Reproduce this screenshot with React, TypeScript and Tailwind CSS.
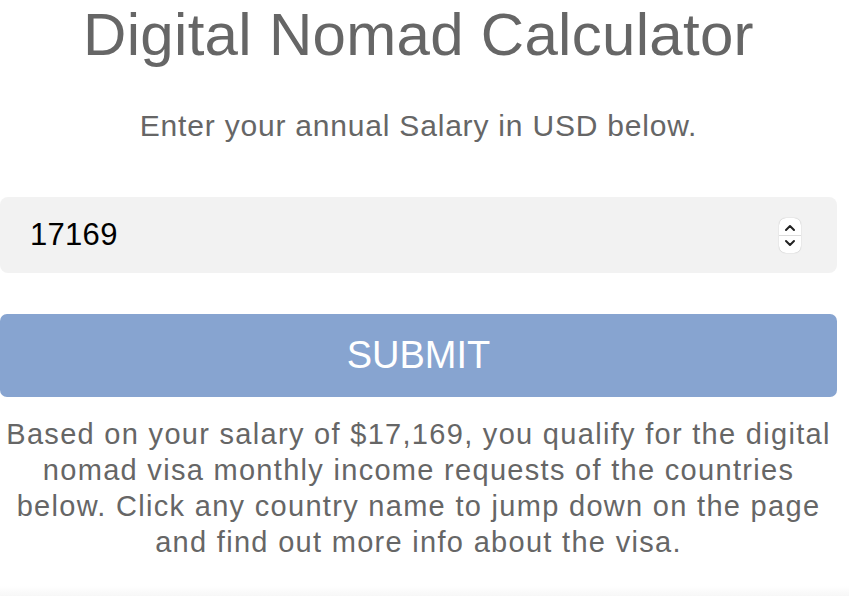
export default function App() {
  return (
    <div className="min-h-[596px] w-[849px] overflow-hidden bg-white font-['Liberation_Sans',Arial,sans-serif]">
      <div className="flex w-[837px] flex-col">
        <h1 className="pt-px text-center text-[60px] leading-[68px] font-normal tracking-[0.3px] text-[#666666]">
          Digital Nomad Calculator
        </h1>
        <p className="mt-[40px] text-center text-[30px] leading-[34px] tracking-[0.8px] text-[#666666]">
          Enter your annual Salary in USD below.
        </p>
        <div className="mt-[54px] flex h-[76px] items-center justify-between rounded-[8px] bg-[#f2f2f2] pr-[36px] pl-[30px]">
          <span className="text-[31px] tracking-[0.3px] text-black">17169</span>
          <div className="flex h-[35px] w-[22px] flex-col items-center justify-center rounded-[7px] bg-white shadow-[0_0_1px_rgba(0,0,0,0.35)]">
            <svg width="12" height="8" viewBox="0 0 12 8" className="mb-[3px]">
              <path d="M2 6 L6 2 L10 6" fill="none" stroke="#222" strokeWidth="2" strokeLinecap="round" strokeLinejoin="round" />
            </svg>
            <div className="h-px w-full bg-[#dcdcdc]" />
            <svg width="12" height="8" viewBox="0 0 12 8" className="mt-[3px]">
              <path d="M2 2 L6 6 L10 2" fill="none" stroke="#222" strokeWidth="2" strokeLinecap="round" strokeLinejoin="round" />
            </svg>
          </div>
        </div>
        <button className="mt-[41px] flex h-[83px] items-center justify-center rounded-[7px] bg-[#87a4d0] text-[38px] text-white">
          SUBMIT
        </button>
        <p className="mt-[19px] text-center text-[29px] leading-[36px] tracking-[1.3px] text-[#666666]">
          Based on your salary of $17,169, you qualify for the digital nomad visa monthly income requests of the countries below. Click any country name to jump down on the page and find out more info about the visa.
        </p>
      </div>
      <div className="mt-[26px] h-[10px] w-full bg-gradient-to-b from-white to-[#f7f7f7]" />
    </div>
  );
}
